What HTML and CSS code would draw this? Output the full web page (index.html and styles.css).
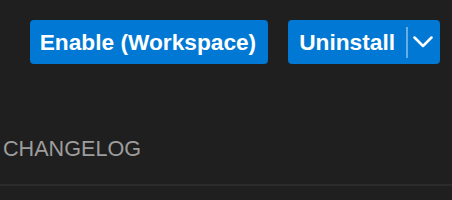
FILE: index.html
```html
<!DOCTYPE html>
<html>
<head>
<meta charset="utf-8">
<link rel="stylesheet" href="styles.css">
</head>
<body>
<div class="actions">
  <button class="btn btn-enable">Enable (Workspace)</button>
  <div class="btn btn-split">
    <span class="label">Uninstall</span>
    <span class="sep"></span>
    <span class="drop">
      <svg width="20" height="12" viewBox="0 0 20 12"><path d="M1.5 1.5 L10 10 L18.5 1.5" fill="none" stroke="#fff" stroke-width="2.5" stroke-linecap="round" stroke-linejoin="round"/></svg>
    </span>
  </div>
</div>
<div class="tabs">
  <span class="tab">CHANGELOG</span>
</div>
</body>
</html>
```

FILE: styles.css
```css
html, body {
  margin: 0;
  padding: 0;
  background: #1f1f1f;
  height: 200px;
  overflow: hidden;
}
body {
  font-family: "Liberation Sans", Arial, sans-serif;
}
.actions {
  display: flex;
  justify-content: flex-end;
  gap: 20px;
  padding: 20px 12px 0 0;
}
.btn {
  background: #0078d4;
  color: #fff;
  border: none;
  border-radius: 4px;
  height: 44px;
  font-family: "Liberation Sans", Arial, sans-serif;
  font-weight: bold;
  font-size: 22.7px;
  line-height: 44px;
  box-sizing: border-box;
  margin: 0;
}
.btn-enable {
  padding: 0 12px 0 10px;
}
.btn-split {
  display: flex;
  align-items: center;
  padding: 0 7px 0 11px;
}
.sep {
  width: 2px;
  height: 31px;
  margin-left: 11px;
  background: rgba(255, 255, 255, 0.4);
}
.drop {
  display: flex;
  margin-left: 5px;
}
.drop svg {
  display: block;
}
.tabs {
  padding: 67px 0 17px 3px;
  border-bottom: 2px solid #2b2b2b;
}
.tab {
  display: inline-block;
  font-size: 21.6px;
  line-height: 36px;
  color: #9d9d9d;
}
```
